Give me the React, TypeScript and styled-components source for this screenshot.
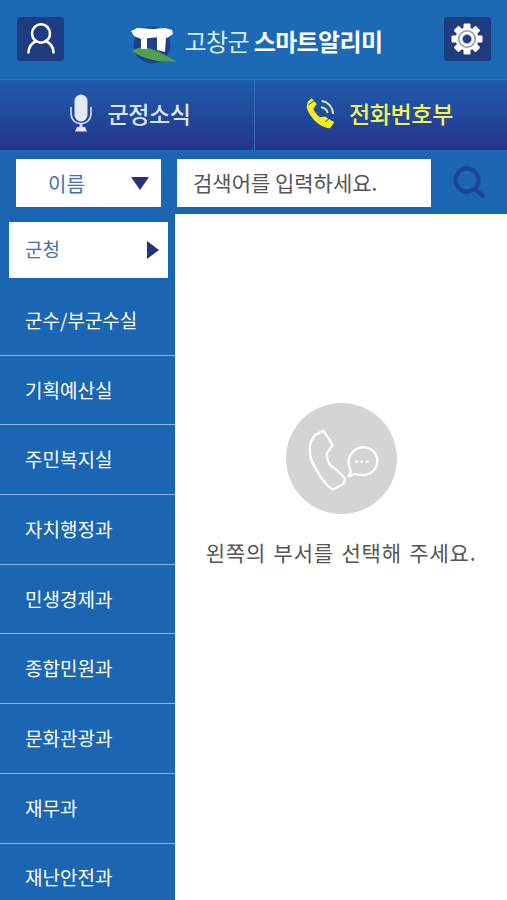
import React from "react";
import styled, { createGlobalStyle } from "styled-components";

const GlobalStyle = createGlobalStyle`
  html, body {
    margin: 0;
    padding: 0;
    background: #ffffff;
  }
  * {
    box-sizing: border-box;
  }
`;

const Page = styled.div`
  width: 507px;
  height: 900px;
  overflow: hidden;
  display: flex;
  flex-direction: column;
  background: #1b66b3;
  font-family: "Noto Sans CJK KR", "Noto Sans", sans-serif;
`;

const TopBar = styled.div`
  height: 79px;
  flex: none;
  display: flex;
  align-items: center;
  justify-content: space-between;
  padding: 0 16px 0 17px;
  background: #1c69b6;
`;

const SquareButton = styled.div`
  width: 47px;
  height: 44px;
  margin-top: -2px;
  display: flex;
  align-items: center;
  justify-content: center;
  background: #1f3c80;
  border-radius: 3px;
`;

const Brand = styled.div`
  display: flex;
  align-items: center;
  gap: 5px;
  margin-left: 4px;
  margin-top: 10px;
`;

const BrandName = styled.div`
  font-size: 24px;
  line-height: 32px;
  letter-spacing: -0.6px;
  color: #dcebf8;
  white-space: nowrap;
  margin-top: -8px;
  strong {
    color: #ffffff;
    font-weight: 700;
  }
`;

const Tabs = styled.div`
  height: 71px;
  flex: none;
  display: flex;
  border-top: 1px solid #2f77bd;
  background: linear-gradient(180deg, #1e5dab 0%, #25358f 100%);
`;

const Tab = styled.div<{ $active?: boolean }>`
  flex: 0 0 ${(p) => (p.$active ? "253px" : "254px")};
  display: flex;
  align-items: center;
  justify-content: center;
  gap: ${(p) => (p.$active ? "12px" : "15px")};
  padding: ${(p) => (p.$active ? "0 4px 4px 0" : "0 0 4px 7px")};
  font-size: 23px;
  font-weight: 500;
  letter-spacing: -0.4px;
  color: ${(p) => (p.$active ? "#f6f25a" : "#dce6f6")};
  & + & {
    border-left: 1px solid #2f6cb6;
  }
`;

const SearchBar = styled.div`
  height: 64px;
  flex: none;
  display: flex;
  align-items: flex-start;
  padding: 9px 0 0 16px;
  background: #1b66b3;
`;

const SearchType = styled.div`
  width: 145px;
  height: 48px;
  display: flex;
  align-items: center;
  justify-content: space-between;
  padding: 0 12px 0 32px;
  background: #ffffff;
  font-size: 20px;
  color: #3f72a8;
`;

const SearchInput = styled.div`
  width: 254px;
  height: 48px;
  margin-left: 16px;
  display: flex;
  align-items: center;
  padding: 0 0 2px 16px;
  background: #ffffff;
  font-size: 21px;
  color: #555555;
  white-space: nowrap;
`;

const SearchIcon = styled.div`
  margin-left: 22px;
  margin-top: 7px;
  display: flex;
`;

const Body = styled.div`
  flex: 1;
  display: flex;
  min-height: 0;
`;

const Sidebar = styled.div`
  width: 175px;
  flex: none;
  background: #1b66b3;
`;

const SelectedDept = styled.div`
  width: 159px;
  height: 56px;
  margin: 8px 0 8px 9px;
  display: flex;
  align-items: center;
  justify-content: space-between;
  padding: 0 9px 0 16px;
  background: #ffffff;
  font-size: 19px;
  line-height: 24px;
  color: #3f72a8;
  span {
    margin-top: -3px;
  }
`;

const Dept = styled.div`
  height: 69.7px;
  display: flex;
  align-items: center;
  padding: 0 0 2px 25px;
  font-size: 19px;
  color: #ffffff;
  border-bottom: 1px solid #8db4da;
`;

const Content = styled.div`
  flex: 1;
  display: flex;
  flex-direction: column;
  align-items: center;
  padding-top: 189px;
  background: #ffffff;
`;

const Badge = styled.div`
  width: 111px;
  height: 111px;
  display: flex;
  border-radius: 50%;
  background: #d4d4d4;
`;

const Hint = styled.div`
  margin-top: 23px;
  font-size: 21px;
  line-height: 30px;
  letter-spacing: 0.8px;
  word-spacing: 2px;
  color: #555555;
  white-space: nowrap;
`;

const departments = [
  "군수/부군수실",
  "기획예산실",
  "주민복지실",
  "자치행정과",
  "민생경제과",
  "종합민원과",
  "문화관광과",
  "재무과",
  "재난안전과",
];

const Logo = () => (
  <svg width="50" height="38" viewBox="0 0 50 38">
    <circle cx="23" cy="19" r="18.5" fill="#1f3f8c" />
    <path d="M3 25 C8 22 13 20 19 22 C30 25 40 31 48 36 C38 35 30 36 24 34 C15 32 8 29 3 25 Z" fill="#4f9f4d" />
    <path d="M2 5 L8 2 L24 3 L36 2 L43 4 L44 8 L38 12 L30 11 L12 13 L5 10 Z" fill="#ffffff" />
    <rect x="12" y="11" width="6" height="12" fill="#ffffff" />
    <path d="M28 11 H37 L36 26 L28 24 Z" fill="#ffffff" />
  </svg>
);

const UserIcon = () => (
  <svg width="28" height="31" viewBox="0 0 28 31" fill="none" stroke="#ffffff" strokeWidth="2.6">
    <ellipse cx="14" cy="10.5" rx="9" ry="9.2" />
    <path d="M1.5 29.5 C1.5 23 5 20 9.5 18 M26.5 29.5 C26.5 23 23 20 18.5 18" strokeLinecap="round" />
  </svg>
);

const GearIcon = () => (
  <svg width="32" height="32" viewBox="0 0 32 32">
    <g fill="#ffffff">
      {[0, 45, 90, 135, 180, 225, 270, 315].map((a) => (
        <rect key={a} x="12.5" y="0.5" width="7" height="8" rx="1" transform={`rotate(${a} 16 16)`} />
      ))}
    </g>
    <circle cx="16" cy="16" r="11.5" fill="#ffffff" />
    <circle cx="16" cy="16" r="8.2" fill="none" stroke="#8e97b4" strokeWidth="1.6" />
    <circle cx="16" cy="16" r="4.6" fill="#1f3c80" stroke="#aeb5ca" strokeWidth="1" />
  </svg>
);

const MicIcon = () => (
  <svg width="22" height="38" viewBox="0 0 22 38">
    <rect x="4.5" y="0.5" width="13" height="27" rx="6.5" fill="#e4e9f6" />
    <path d="M1 13 V19 C1 25.5 5 29.5 11 29.5 C17 29.5 21 25.5 21 19 V13" fill="none" stroke="#d5dff2" strokeWidth="1.6" />
    <rect x="9.5" y="29.5" width="3" height="4" fill="#d5dff2" />
    <path d="M7 33 H15 L17 37.5 H5 Z" fill="#e4e9f6" />
  </svg>
);

const PhoneCallIcon = () => (
  <svg width="32" height="32" viewBox="0 0 32 32" fill="none">
    <path
      d="M2.7 4.7 L6.7 1.3 L11.7 7 L8.3 12 C10 15.5 12.5 18.5 15 20.3 L20 19.5 L29.3 25.3 L25 31.3 C15 31 4 20 1.7 10.3 Z"
      fill="#f4ee22"
    />
    <path d="M3.5 8 L9.5 3.5 M20 25 L25.5 20.5" stroke="#1f3c80" strokeWidth="0.9" />
    <path d="M16.7 3.7 C23 5 27.5 10 28.3 17" stroke="#dfe6b4" strokeWidth="2" />
    <path d="M16 10.3 C19.5 10.8 22 13 22.7 16" stroke="#dfe6b4" strokeWidth="2" />
  </svg>
);

const MagnifierIcon = () => (
  <svg width="32" height="32" viewBox="0 0 32 32" fill="none" stroke="#1f439b" strokeWidth="4.2">
    <circle cx="14" cy="14" r="11.5" />
    <path d="M22 23 L30 30" strokeLinecap="round" />
  </svg>
);

const DownArrow = () => (
  <svg width="18" height="13" viewBox="0 0 18 13">
    <path d="M0 0 H18 L9 13 Z" fill="#25307f" />
  </svg>
);

const RightArrow = () => (
  <svg width="12" height="18" viewBox="0 0 12 18">
    <path d="M0 0 L12 9 L0 18 Z" fill="#25307f" />
  </svg>
);

const PhoneChatIcon = () => (
  <svg width="111" height="111" viewBox="0 0 111 111" fill="none" stroke="#ffffff" strokeWidth="2.3" strokeLinejoin="round">
    <path d="M29 32 L37.3 27.7 L46.7 42 L40.7 50.3 C41 55 42 59 44 62 L50.7 67 L59 75.3 C59 78 58 80.5 55.7 82 L47.3 86.3 C43 85 39 80 35.7 75.3 C29 65 24 57 24 50.3 C23.5 44 24 40 25.7 37 Z" />
    <path d="M62.3 73 C64 71 65 69.5 64.5 67 C62 62 62 56 65 51 C69 45 76 43 82 45 C89 47.5 92.5 54 91 61 C89.5 68 83 72.5 76 72 C72 72 70 70.5 68 71 C66.5 72 64.5 73 62.3 73 Z" />
    <g fill="#ffffff" stroke="none">
      <circle cx="70.7" cy="58.7" r="1.4" />
      <circle cx="75.7" cy="58.7" r="1.4" />
      <circle cx="81.3" cy="58.7" r="1.4" />
    </g>
  </svg>
);

export default function App() {
  return (
    <Page>
      <GlobalStyle />
      <TopBar>
        <SquareButton>
          <UserIcon />
        </SquareButton>
        <Brand>
          <Logo />
          <BrandName>
            고창군 <strong>스마트알리미</strong>
          </BrandName>
        </Brand>
        <SquareButton>
          <GearIcon />
        </SquareButton>
      </TopBar>
      <Tabs>
        <Tab>
          <MicIcon />
          군정소식
        </Tab>
        <Tab $active>
          <PhoneCallIcon />
          전화번호부
        </Tab>
      </Tabs>
      <SearchBar>
        <SearchType>
          <span>이름</span>
          <DownArrow />
        </SearchType>
        <SearchInput>검색어를 입력하세요.</SearchInput>
        <SearchIcon>
          <MagnifierIcon />
        </SearchIcon>
      </SearchBar>
      <Body>
        <Sidebar>
          <SelectedDept>
            <span>군청</span>
            <RightArrow />
          </SelectedDept>
          {departments.map((name) => (
            <Dept key={name}>{name}</Dept>
          ))}
        </Sidebar>
        <Content>
          <Badge>
            <PhoneChatIcon />
          </Badge>
          <Hint>왼쪽의 부서를 선택해 주세요.</Hint>
        </Content>
      </Body>
    </Page>
  );
}
